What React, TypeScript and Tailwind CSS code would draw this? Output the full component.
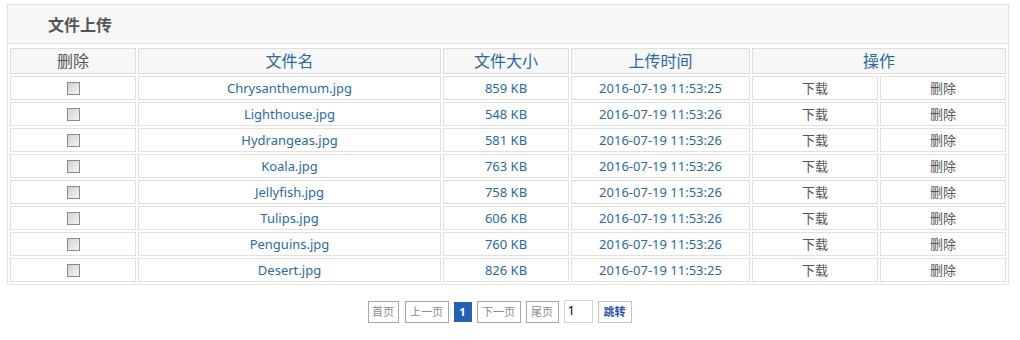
import React from "react";

type FileRow = { name: string; size: string; time: string };

const FILES: FileRow[] = [
  { name: "Chrysanthemum.jpg", size: "859 KB", time: "2016-07-19 11:53:25" },
  { name: "Lighthouse.jpg", size: "548 KB", time: "2016-07-19 11:53:26" },
  { name: "Hydrangeas.jpg", size: "581 KB", time: "2016-07-19 11:53:26" },
  { name: "Koala.jpg", size: "763 KB", time: "2016-07-19 11:53:26" },
  { name: "Jellyfish.jpg", size: "758 KB", time: "2016-07-19 11:53:26" },
  { name: "Tulips.jpg", size: "606 KB", time: "2016-07-19 11:53:26" },
  { name: "Penguins.jpg", size: "760 KB", time: "2016-07-19 11:53:26" },
  { name: "Desert.jpg", size: "826 KB", time: "2016-07-19 11:53:25" },
];

const FONT = "font-['Noto_Sans','Noto_Sans_CJK_SC',sans-serif]";

function Box() {
  return (
    <span className="inline-block h-[13px] w-[13px] border border-[#8a8a8a] bg-gradient-to-br from-[#d2d2d2] to-[#f4f4f4] align-middle" />
  );
}

function PageBtn({ label, w }: { label: string; w: string }) {
  return (
    <span
      className={`flex h-[22px] ${w} items-center justify-center border border-[#a8a8a8] text-[11px] text-[#8a8a8a]`}
    >
      {label}
    </span>
  );
}

export default function App() {
  const th =
    "h-[26px] border border-[#dedede] bg-[#f7f7f7] p-0 text-center align-middle text-[16px] font-normal leading-none";
  const td =
    "h-[24px] border border-[#e0e0e0] p-0 text-center align-middle text-[13px] leading-none";

  return (
    <div className={`h-[340px] w-[1020px] bg-white pt-[4px] ${FONT}`}>
      <div className="ml-[7px] w-[1002px] border border-[#e3e3e3]">
        <div className="flex h-[39px] items-center border-b border-[#e3e3e3] bg-[#f7f7f7] pl-[40px] pt-[2px]">
          <span className="text-[16px] font-bold text-[#555]">文件上传</span>
        </div>
        <table className="mt-[2px] w-full table-fixed border-separate border-spacing-[2px]">
          <colgroup>
            <col className="w-[126px]" />
            <col className="w-[303px]" />
            <col className="w-[126px]" />
            <col className="w-[179px]" />
            <col className="w-[126px]" />
            <col className="w-[126px]" />
          </colgroup>
          <thead>
            <tr>
              <th className={`${th} text-[#555]`}>删除</th>
              <th className={`${th} text-[#2b6aa0]`}>文件名</th>
              <th className={`${th} text-[#2b6aa0]`}>文件大小</th>
              <th className={`${th} text-[#2b6aa0]`}>上传时间</th>
              <th colSpan={2} className={`${th} text-[#2b6aa0]`}>
                操作
              </th>
            </tr>
          </thead>
          <tbody>
            {FILES.map((f) => (
              <tr key={f.name}>
                <td className={td}>
                  <Box />
                </td>
                <td className={`${td} text-[#2b6aa0]`}>{f.name}</td>
                <td className={`${td} text-[#2b6aa0]`}>{f.size}</td>
                <td className={`${td} text-[#2b6aa0]`}>{f.time}</td>
                <td className={`${td} text-[#555]`}>下载</td>
                <td className={`${td} text-[#555]`}>删除</td>
              </tr>
            ))}
          </tbody>
        </table>
      </div>

      <div className="mt-[16px] flex items-center justify-center gap-[5px] pr-[21px]">
        <PageBtn label="首页" w="w-[31px]" />
        <span className="ml-px flex">
          <PageBtn label="上一页" w="w-[44px]" />
        </span>
        <span className="flex h-[20px] w-[18px] items-center justify-center bg-[#2660b4] text-[11px] font-bold text-white">
          1
        </span>
        <PageBtn label="下一页" w="w-[44px]" />
        <PageBtn label="尾页" w="w-[33px]" />
        <span className="-mt-[2px] flex h-[23px] w-[29px] items-center border border-[#d4d4d4] pl-[3px] text-[13px] text-black">
          1
        </span>
        <span className="flex h-[22px] w-[34px] items-center justify-center border border-[#c4c4c4] text-[11px] font-bold text-[#2a55a8]">
          跳转
        </span>
      </div>
    </div>
  );
}
